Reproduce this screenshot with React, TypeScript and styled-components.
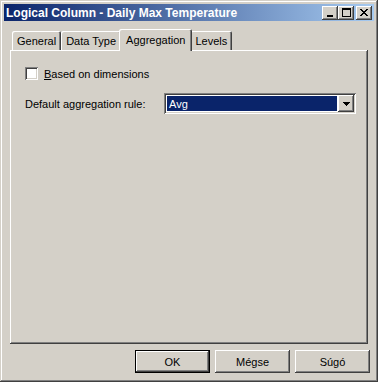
import React from 'react'
import styled, { createGlobalStyle, css } from 'styled-components'

const face = '#d4d0c8'
const shadow = '#808080'
const dark = '#404040'

const GlobalStyle = createGlobalStyle`
  html, body {
    margin: 0;
    padding: 0;
    background: ${face};
  }
  body {
    font-family: 'Liberation Sans', Arial, sans-serif;
    font-size: 11px;
    color: #000;
  }
  * {
    box-sizing: border-box;
  }
`

const raised = css`
  background: ${face};
  box-shadow: inset -1px -1px ${dark}, inset 1px 1px #fff, inset -2px -2px ${shadow},
    inset 2px 2px ${face};
`

const sunken = css`
  box-shadow: inset 1px 1px ${shadow}, inset -1px -1px #fff, inset 2px 2px ${dark},
    inset -2px -2px ${face};
`

const Window = styled.div`
  width: 378px;
  height: 382px;
  padding: 4px;
  display: flex;
  flex-direction: column;
  background: ${face};
  box-shadow: inset -1px -1px ${dark}, inset 1px 1px ${face}, inset -2px -2px ${shadow},
    inset 2px 2px #fff;
`

const TitleBar = styled.div`
  height: 18px;
  display: flex;
  align-items: center;
  justify-content: space-between;
  padding: 0 2px 0 2px;
  background: linear-gradient(to right, #0a246a, #a6caf0);
`

const TitleText = styled.span`
  color: #fff;
  font-weight: bold;
  font-size: 12px;
`

const Caption = styled.div`
  display: flex;
  align-items: center;
`

const CaptionButton = styled.button<{ $gap?: boolean }>`
  ${raised};
  width: 16px;
  height: 14px;
  border: 0;
  padding: 0;
  margin-left: ${({ $gap }) => ($gap ? '2px' : '0')};
  display: flex;
  align-items: center;
  justify-content: center;
`

const Body = styled.div`
  flex: 1;
  display: flex;
  flex-direction: column;
  padding: 7px 4px 5px 6px;
`

const TabStrip = styled.div`
  display: flex;
  align-items: flex-end;
  height: 22px;
  padding-left: 2px;
  position: relative;
  z-index: 1;
`

const Tab = styled.div<{ $active?: boolean }>`
  height: ${({ $active }) => ($active ? '22px' : '19px')};
  padding: 0 ${({ $active }) => ($active ? '7px' : '5px')};
  margin: 0 ${({ $active }) => ($active ? '-2px' : '0')};
  margin-bottom: ${({ $active }) => ($active ? '-1px' : '0')};
  display: flex;
  align-items: center;
  padding-top: ${({ $active }) => ($active ? '0' : '1px')};
  background: ${face};
  border-radius: 2px 2px 0 0;
  box-shadow: inset 1px 1px #fff, inset -1px 0 ${dark}, inset -2px 0 ${shadow};
  position: relative;
  z-index: ${({ $active }) => ($active ? 2 : 1)};
  white-space: nowrap;
`

const Panel = styled.div`
  height: 294px;
  margin-right: 2px;
  padding: 15px 15px;
  box-shadow: inset -1px -1px ${dark}, inset 1px 1px #fff, inset -2px -2px ${shadow};
  display: flex;
  flex-direction: column;
  gap: 11px;
`

const CheckRow = styled.label`
  display: flex;
  align-items: center;
  gap: 6px;
  height: 17px;
`

const CheckBox = styled.span`
  width: 13px;
  height: 13px;
  background: #fff;
  ${sunken};
`

const FieldRow = styled.div`
  display: flex;
  align-items: center;
  height: 21px;
`

const FieldLabel = styled.span`
  width: 139px;
  flex-shrink: 0;
`

const Combo = styled.div`
  width: 192px;
  flex-shrink: 0;
  height: 21px;
  padding: 2px;
  background: #fff;
  ${sunken};
  display: flex;
`

const ComboValue = styled.div`
  flex: 1;
  background: #0a246a;
  color: #fff;
  padding-left: 2px;
  display: flex;
  align-items: center;
  margin: 1px;
`

const ComboButton = styled.div`
  ${raised};
  width: 16px;
  height: 17px;
  display: flex;
  align-items: center;
  justify-content: center;
`

const ButtonRow = styled.div`
  display: flex;
  justify-content: flex-end;
  gap: 5px;
  margin-top: 6px;
`

const DialogButton = styled.button<{ $default?: boolean }>`
  width: 75px;
  height: 23px;
  border: 0;
  padding: 0;
  font-family: 'Liberation Sans', Arial, sans-serif;
  font-size: 11px;
  color: #000;
  background: ${face};
  box-shadow: ${({ $default }) =>
    $default
      ? `inset 0 0 0 1px #000, inset -2px -2px ${dark}, inset 2px 2px #fff, inset -3px -3px ${shadow}`
      : `inset -1px -1px ${dark}, inset 1px 1px #fff, inset -2px -2px ${shadow}`};
`

const Arrow = () => (
  <svg width="7" height="4" viewBox="0 0 7 4">
    <path d="M0 0h7v1H0zM1 1h5v1H1zM2 2h3v1H2zM3 3h1v1H3z" fill="#000" />
  </svg>
)

export default function App() {
  return (
    <>
      <GlobalStyle />
      <Window>
        <TitleBar>
          <TitleText>Logical Column - Daily Max Temperature</TitleText>
          <Caption>
            <CaptionButton>
              <svg width="8" height="8" viewBox="0 0 8 8">
                <rect x="1" y="6" width="6" height="2" fill="#000" />
              </svg>
            </CaptionButton>
            <CaptionButton>
              <svg width="9" height="9" viewBox="0 0 9 9">
                <path d="M0 0h9v2H0zM0 2h1v7H0zM8 2h1v7H8zM0 8h9v1H0z" fill="#000" />
              </svg>
            </CaptionButton>
            <CaptionButton $gap>
              <svg width="8" height="7" viewBox="0 0 8 7">
                <path
                  d="M0 0h2v1H0zM6 0h2v1H6zM1 1h2v1H1zM5 1h2v1H5zM2 2h4v1H2zM3 3h2v1H3zM2 4h4v1H2zM1 5h2v1H1zM5 5h2v1H5zM0 6h2v1H0zM6 6h2v1H6z"
                  fill="#000"
                />
              </svg>
            </CaptionButton>
          </Caption>
        </TitleBar>
        <Body>
          <TabStrip>
            <Tab>General</Tab>
            <Tab>Data Type</Tab>
            <Tab $active>Aggregation</Tab>
            <Tab>Levels</Tab>
          </TabStrip>
          <Panel>
            <CheckRow>
              <CheckBox />
              <span>
                <u>B</u>ased on dimensions
              </span>
            </CheckRow>
            <FieldRow>
              <FieldLabel>Default aggregation rule:</FieldLabel>
              <Combo>
                <ComboValue>Avg</ComboValue>
                <ComboButton>
                  <Arrow />
                </ComboButton>
              </Combo>
            </FieldRow>
          </Panel>
          <ButtonRow>
            <DialogButton $default>OK</DialogButton>
            <DialogButton>Mégse</DialogButton>
            <DialogButton>Súgó</DialogButton>
          </ButtonRow>
        </Body>
      </Window>
    </>
  )
}
